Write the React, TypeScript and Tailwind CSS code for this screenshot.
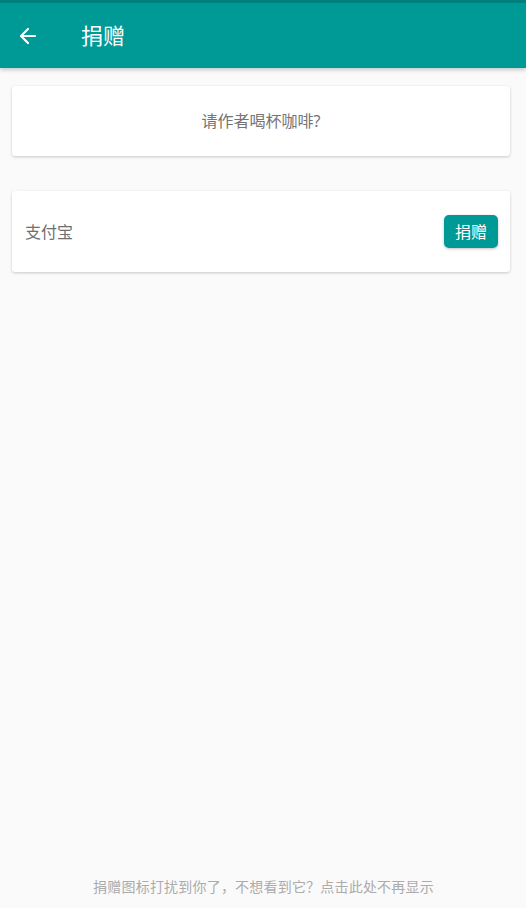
import { ArrowLeft } from "lucide-react";

const font = { fontFamily: '"Noto Sans", "Noto Sans CJK SC", sans-serif' };

export default function App() {
  return (
    <div className="flex h-[908px] w-[526px] flex-col bg-[#fafafa]" style={font}>
      {/* Toolbar */}
      <div className="flex h-[68px] flex-col bg-[#009a96] shadow-[0_2px_4px_rgba(0,0,0,0.2)]">
        <div className="h-[3px] bg-[#00807c]" />
        <div className="flex flex-1 items-center">
          <button className="ml-[16px] flex h-[24px] w-[24px] items-center justify-center text-white">
            <ArrowLeft className="h-[24px] w-[24px]" strokeWidth={2.2} />
          </button>
          <span className="ml-[41px] text-[22px] text-white">捐赠</span>
        </div>
      </div>

      <div className="flex flex-col pl-[12px] pr-[16px] pt-[18px]">
        {/* Intro card */}
        <div className="flex h-[70px] items-center justify-center rounded-[3px] bg-white shadow-[0_1px_3px_rgba(0,0,0,0.2)]">
          <span className="text-[16px] text-[#757575]">请作者喝杯咖啡?</span>
        </div>

        {/* Alipay card */}
        <div className="mt-[35px] flex h-[81px] items-center justify-between rounded-[3px] bg-white pl-[13px] pr-[12px] shadow-[0_1px_3px_rgba(0,0,0,0.2)]">
          <span className="text-[16px] text-[#6f6f6f]">支付宝</span>
          <button className="flex h-[33px] w-[54px] items-center justify-center rounded-[5px] bg-[#009a96] text-[16px] text-white shadow-[0_1px_3px_rgba(0,0,0,0.25)]">
            捐赠
          </button>
        </div>
      </div>

      <div className="flex-1" />

      <div className="flex h-[40px] items-center justify-center pb-[3px] pl-[1px]">
        <span className="text-[14px] tracking-[0.2px] text-[#ababab]">捐赠图标打扰到你了，不想看到它？点击此处不再显示</span>
      </div>
    </div>
  );
}
